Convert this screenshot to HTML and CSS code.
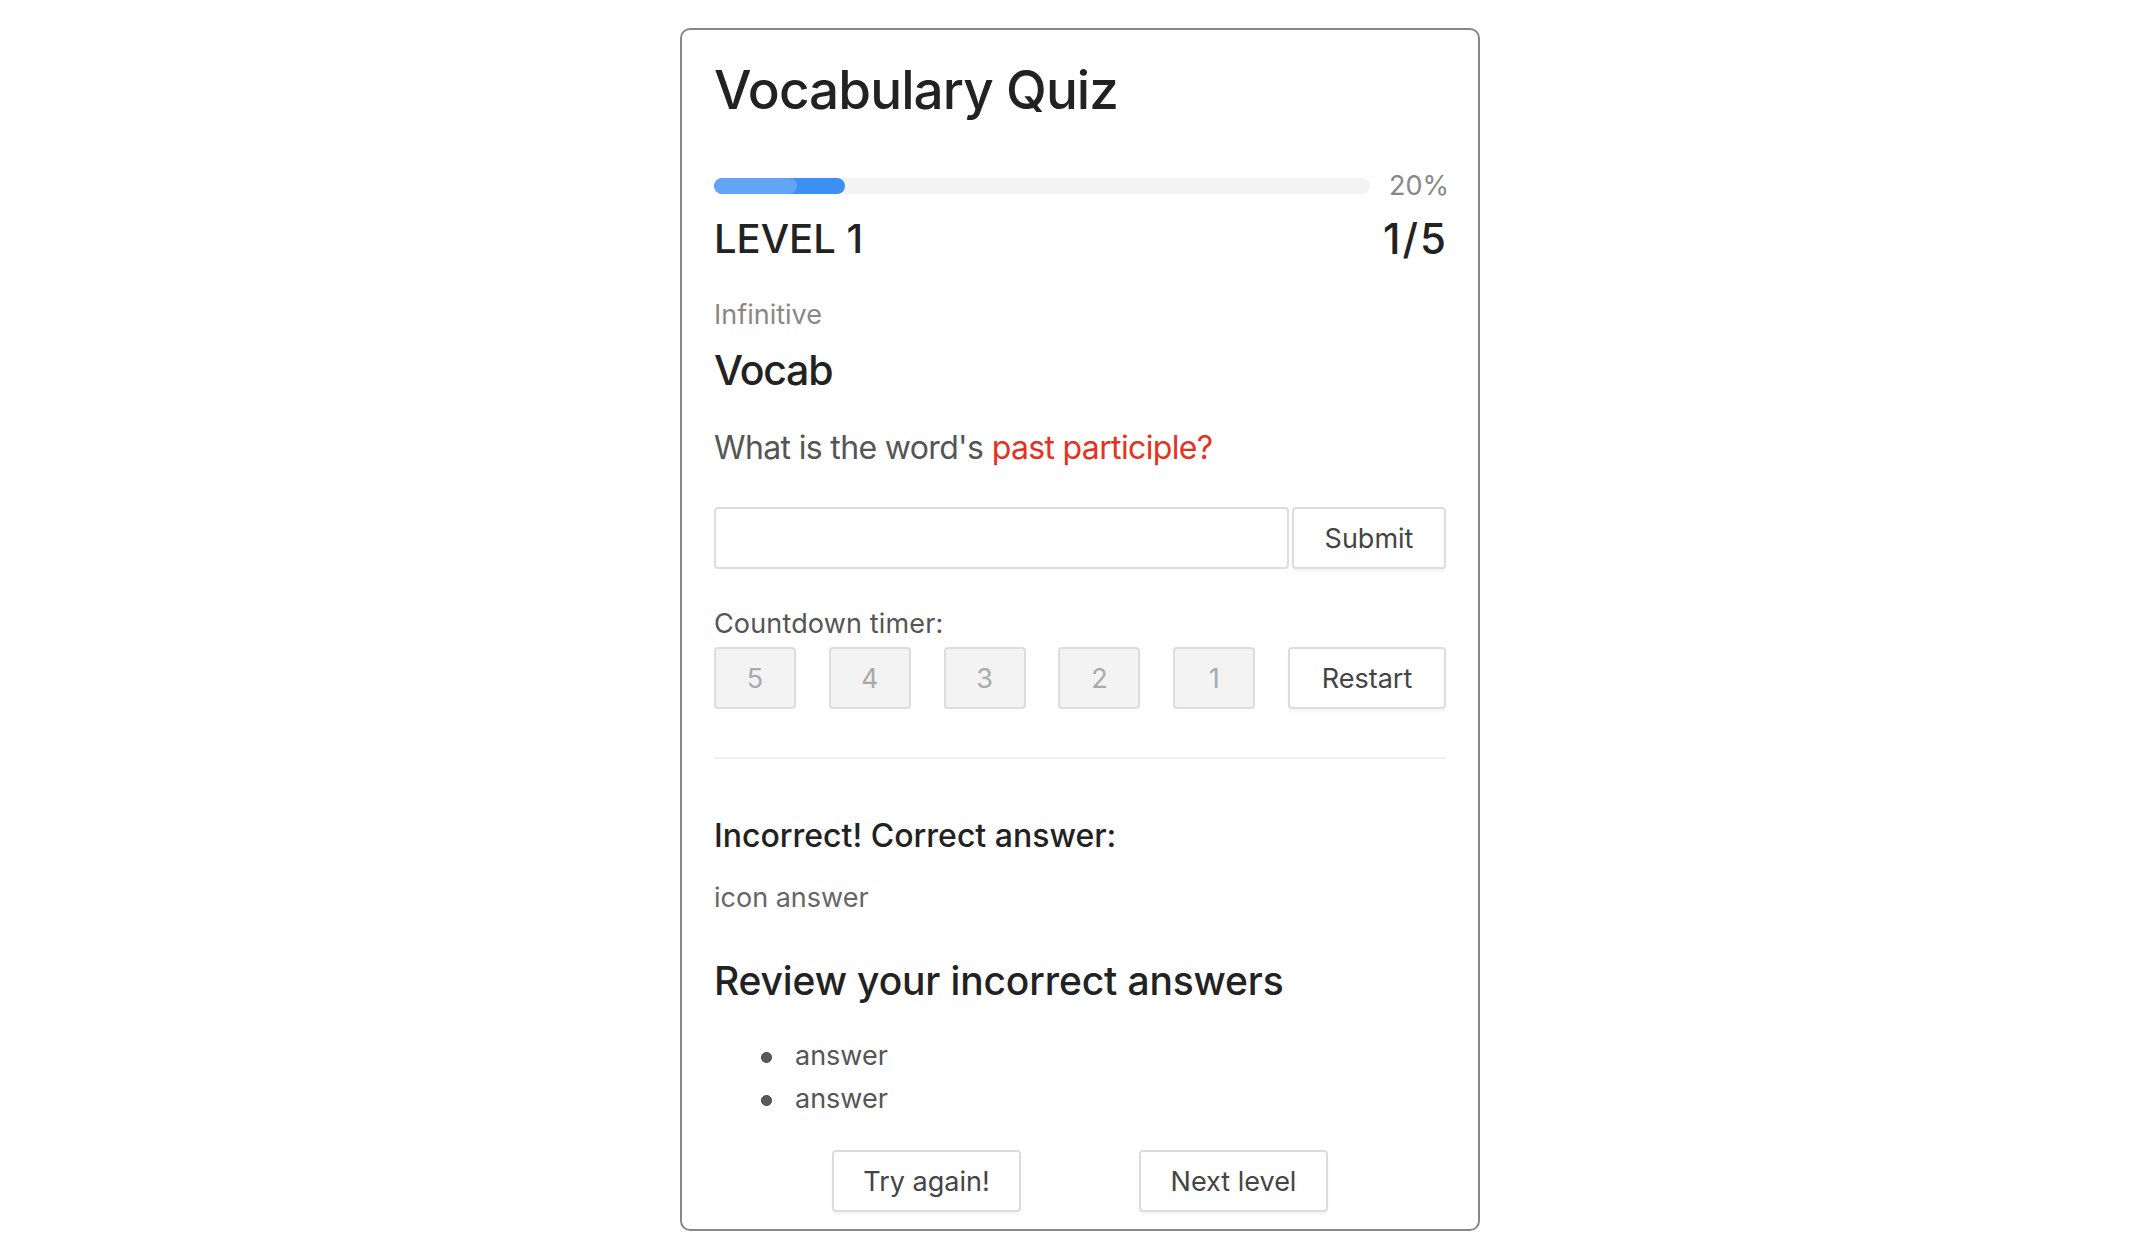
FILE: index.html
```html
<!DOCTYPE html>
<html lang="en">
<head>
<meta charset="utf-8">
<title>Vocabulary Quiz</title>
<link rel="stylesheet" href="styles.css">
</head>
<body>
<div class="card">
  <h1 class="title">Vocabulary Quiz</h1>
  <div class="progress-row">
    <div class="track">
      <div class="fill" style="width:20%"><div class="fill-glow"></div></div>
    </div>
    <span class="percent">20%</span>
  </div>
  <div class="level-row">
    <span>LEVEL 1</span>
    <span class="count">1/5</span>
  </div>
  <div class="form-label">Infinitive</div>
  <div class="word">Vocab</div>
  <p class="question">What is the word's <span class="hl">past participle?</span></p>
  <div class="answer-row">
    <input class="answer-input" type="text">
    <button class="btn submit">Submit</button>
  </div>
  <div class="timer-label">Countdown timer:</div>
  <div class="timer-row">
    <div class="tick">5</div>
    <div class="tick">4</div>
    <div class="tick">3</div>
    <div class="tick">2</div>
    <div class="tick">1</div>
    <button class="btn restart">Restart</button>
  </div>
  <div class="divider"></div>
  <div class="result">Incorrect! Correct answer:</div>
  <div class="correct">icon answer</div>
  <h2 class="review">Review your incorrect answers</h2>
  <ul class="review-list">
    <li>answer</li>
    <li>answer</li>
  </ul>
  <div class="actions">
    <button class="btn action">Try again!</button>
    <button class="btn action">Next level</button>
  </div>
</div>
</body>
</html>
```
FILE: styles.css
```css
*, *::before, *::after { box-sizing: border-box; }
body {
  margin: 0;
  padding-left: 26px;
  background: #fff;
  font-family: Inter, Roboto, "Liberation Sans", sans-serif;
  color: #222;
}
.card {
  width: 800px;
  margin: 28px auto 0;
  border: 2px solid #888;
  border-radius: 10px;
  padding: 28px 32px 17px;
}
.title {
  margin: 0;
  font-size: 53px;
  line-height: 64px;
  font-weight: 500;
  letter-spacing: -0.9px;
  color: #222;
}
.progress-row {
  margin-top: 48px;
  display: flex;
  align-items: center;
  gap: 19px;
  height: 32px;
}
.track {
  flex: 1;
  height: 16px;
  background: #f3f3f3;
  border-radius: 8px;
  overflow: hidden;
}
.fill {
  height: 100%;
  background: #3c8ff5;
  border-radius: 8px;
}
.fill-glow {
  width: 63%;
  height: 100%;
  background: #62a5f6;
  border-radius: 8px;
}
.percent {
  font-size: 27px;
  line-height: 32px;
  color: #888;
  margin-right: -3px;
}
.level-row {
  margin-top: 13px;
  display: flex;
  justify-content: space-between;
  font-size: 40px;
  line-height: 48px;
  font-weight: 500;
  color: #222;
}
.count {
  font-size: 42px;
  letter-spacing: 2px;
  margin-right: -2px;
}
.form-label {
  margin-top: 36px;
  font-size: 27px;
  line-height: 32px;
  color: #888;
}
.word {
  margin-top: 14px;
  font-size: 41px;
  line-height: 50px;
  font-weight: 500;
  letter-spacing: -1.2px;
  color: #222;
}
.question {
  margin: 33px 0 0;
  font-size: 32px;
  line-height: 40px;
  letter-spacing: -0.65px;
  color: #555;
}
.hl { color: #e5321f; }
.answer-row {
  margin-top: 39px;
  display: flex;
  gap: 3px;
  height: 62px;
}
.answer-input {
  flex: 1;
  height: 62px;
  border: 2px solid #ddd;
  border-radius: 4px;
  font: inherit;
  font-size: 27px;
  padding: 0 14px;
  outline: none;
}
.btn {
  font-family: inherit;
  font-size: 27px;
  color: #444;
  background: #fff;
  border: 2px solid #ddd;
  border-radius: 4px;
  box-shadow: 0 3px 3px rgba(0, 0, 0, 0.04);
  height: 62px;
  padding: 0;
  cursor: pointer;
}
.submit { width: 154px; }
.timer-label {
  margin-top: 39px;
  font-size: 27px;
  line-height: 32px;
  letter-spacing: 0.15px;
  color: #555;
}
.timer-row {
  margin-top: 7px;
  display: flex;
  justify-content: space-between;
}
.tick {
  width: 82px;
  height: 62px;
  background: #f3f3f3;
  border: 2px solid #ddd;
  border-radius: 4px;
  color: #aaa;
  font-size: 27px;
  display: flex;
  align-items: center;
  justify-content: center;
}
.restart { width: 158px; }
.divider {
  margin-top: 48px;
  height: 2px;
  background: #eee;
}
.result {
  margin-top: 58px;
  font-size: 32px;
  line-height: 38px;
  font-weight: 500;
  color: #222;
}
.correct {
  margin-top: 27px;
  font-size: 27px;
  line-height: 32px;
  color: #666;
}
.review {
  margin: 43px 0 0;
  font-size: 39px;
  line-height: 48px;
  font-weight: 500;
  letter-spacing: -0.15px;
  color: #222;
}
.review-list {
  list-style: none;
  margin: 29px 0 0;
  padding: 0 0 0 47px;
}
.review-list li {
  font-size: 27px;
  line-height: 43px;
  color: #555;
}
.review-list li::before {
  content: "";
  display: inline-block;
  width: 11px;
  height: 11px;
  border-radius: 50%;
  background: #5a5a5a;
  border: 1px solid #444;
  vertical-align: middle;
  margin-right: 23px;
}
.actions {
  margin-top: 30px;
  display: flex;
  justify-content: center;
  gap: 118px;
}
.action { width: 189px; }
```
